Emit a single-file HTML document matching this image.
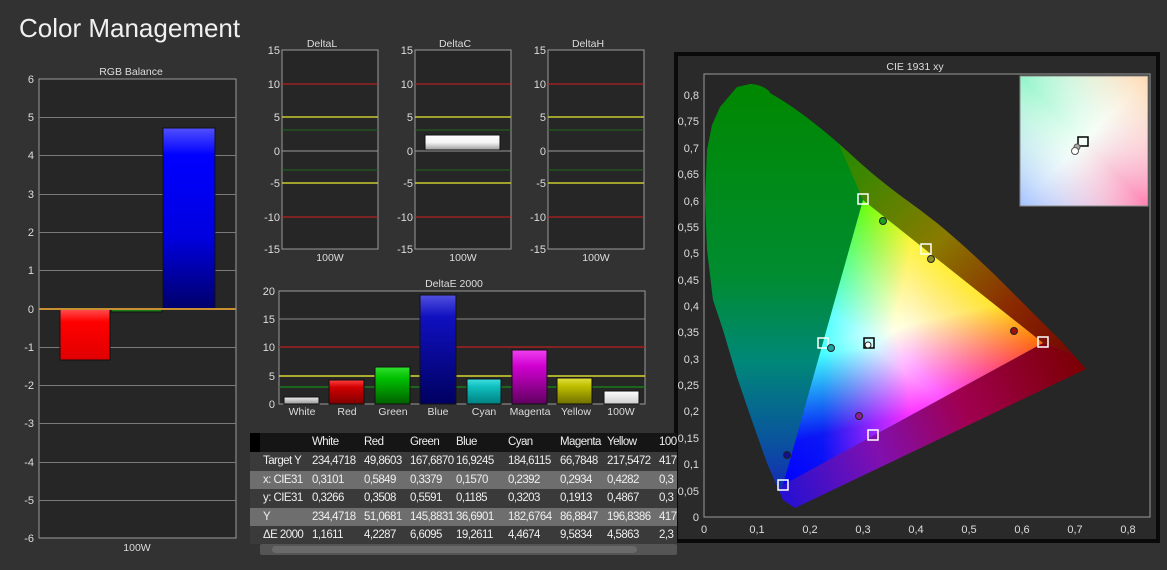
<!DOCTYPE html>
<html><head><meta charset="utf-8"><style>
html,body{margin:0;padding:0;background:#323232;width:1167px;height:570px;overflow:hidden;font-family:"Liberation Sans",sans-serif}
svg text{font-family:"Liberation Sans",sans-serif}
.tbl{position:absolute;left:250px;top:433px;width:427px;height:111px;overflow:hidden;font-size:11.5px;letter-spacing:-0.55px;color:#eee}
.row{position:absolute;left:0;width:427px;height:18.5px;line-height:18.5px;white-space:nowrap}
.row span{position:absolute}
</style></head><body>
<svg width="1167" height="570" style="position:absolute;left:0;top:0">
<defs>
<linearGradient id="gR" x1="0" y1="0" x2="0" y2="1"><stop offset="0" stop-color="#ff5050"/><stop offset=".25" stop-color="#ff0000"/><stop offset="1" stop-color="#e00000"/></linearGradient>
<linearGradient id="gB" x1="0" y1="0" x2="0" y2="1"><stop offset="0" stop-color="#5050ff"/><stop offset=".15" stop-color="#0000ff"/><stop offset=".6" stop-color="#0000e0"/><stop offset="1" stop-color="#00006a"/></linearGradient>
<linearGradient id="eW" x1="0" y1="0" x2="0" y2="1"><stop offset="0" stop-color="#eee"/><stop offset="1" stop-color="#999"/></linearGradient>
<linearGradient id="eR" x1="0" y1="0" x2="0" y2="1"><stop offset="0" stop-color="#ff4040"/><stop offset=".3" stop-color="#d00000"/><stop offset="1" stop-color="#800000"/></linearGradient>
<linearGradient id="eG" x1="0" y1="0" x2="0" y2="1"><stop offset="0" stop-color="#30e030"/><stop offset=".3" stop-color="#00c000"/><stop offset="1" stop-color="#006000"/></linearGradient>
<linearGradient id="eB" x1="0" y1="0" x2="0" y2="1"><stop offset="0" stop-color="#5050e0"/><stop offset=".2" stop-color="#1010c0"/><stop offset="1" stop-color="#000060"/></linearGradient>
<linearGradient id="eC" x1="0" y1="0" x2="0" y2="1"><stop offset="0" stop-color="#40e0e0"/><stop offset=".3" stop-color="#10c0c0"/><stop offset="1" stop-color="#008080"/></linearGradient>
<linearGradient id="eM" x1="0" y1="0" x2="0" y2="1"><stop offset="0" stop-color="#f040f0"/><stop offset=".3" stop-color="#d000d0"/><stop offset="1" stop-color="#600060"/></linearGradient>
<linearGradient id="eY" x1="0" y1="0" x2="0" y2="1"><stop offset="0" stop-color="#e0e040"/><stop offset=".3" stop-color="#c0c000"/><stop offset="1" stop-color="#707000"/></linearGradient>
<linearGradient id="eWW" x1="0" y1="0" x2="0" y2="1"><stop offset="0" stop-color="#fff"/><stop offset="1" stop-color="#ccc"/></linearGradient>
<linearGradient id="dc" x1="0" y1="0" x2="0" y2="1"><stop offset="0" stop-color="#fff"/><stop offset=".5" stop-color="#f4f4f4"/><stop offset="1" stop-color="#999"/></linearGradient>
<clipPath id="horse"><path d="M795,508 L783,500 L767,463 L750,415 L737,377 L723,330 L713,300 L707,250 L705,200 L707,150 L712,125 L720,107 L737,87 L750,84 C760,84 770,90 770,93 C800,110 830,135 857,160 C890,190 915,205 937,223 C960,242 985,265 1003,283 C1025,305 1045,325 1063,343 L1086,369 Z"/></clipPath>
<linearGradient id="baseV" gradientUnits="userSpaceOnUse" x1="0" y1="85" x2="0" y2="510"><stop offset="0" stop-color="#008800"/><stop offset=".45" stop-color="#008c30"/><stop offset=".65" stop-color="#008878"/><stop offset=".85" stop-color="#0a50a0"/><stop offset="1" stop-color="#1818c0"/></linearGradient>
<linearGradient id="low" gradientUnits="userSpaceOnUse" x1="790" y1="500" x2="1090" y2="370"><stop offset="0" stop-color="#2a10d0"/><stop offset=".3" stop-color="#8010b0"/><stop offset=".6" stop-color="#a00050"/><stop offset="1" stop-color="#7a0000"/></linearGradient>
<linearGradient id="up" gradientUnits="userSpaceOnUse" x1="850" y1="150" x2="1080" y2="370"><stop offset="0" stop-color="#2a8a00"/><stop offset=".4" stop-color="#8a7a00"/><stop offset=".7" stop-color="#8a2a00"/><stop offset="1" stop-color="#700000"/></linearGradient>
<linearGradient id="tR" gradientUnits="userSpaceOnUse" x1="1043" y1="343" x2="823" y2="342"><stop offset="0" stop-color="#ff0000"/><stop offset=".6" stop-color="#ff0030" stop-opacity=".9"/><stop offset="1" stop-color="#ff0000" stop-opacity="0"/></linearGradient>
<linearGradient id="tG" gradientUnits="userSpaceOnUse" x1="863" y1="200" x2="913" y2="414"><stop offset="0" stop-color="#00ff00"/><stop offset=".6" stop-color="#40ff20" stop-opacity=".9"/><stop offset="1" stop-color="#00ff00" stop-opacity="0"/></linearGradient>
<linearGradient id="tB" gradientUnits="userSpaceOnUse" x1="783" y1="485" x2="953" y2="271"><stop offset="0" stop-color="#0000ff"/><stop offset=".6" stop-color="#2040ff" stop-opacity=".9"/><stop offset="1" stop-color="#0000ff" stop-opacity="0"/></linearGradient>
<linearGradient id="inA" x1="0" y1="0" x2="1" y2="1"><stop offset="0" stop-color="#90f4c8"/><stop offset=".5" stop-color="#f4fff8"/><stop offset="1" stop-color="#ff80b0"/></linearGradient>
<linearGradient id="inB" x1="1" y1="0" x2="0" y2="1"><stop offset="0" stop-color="#ffd8b0"/><stop offset=".5" stop-color="#fff" stop-opacity="0"/><stop offset="1" stop-color="#a0c0ff"/></linearGradient>
</defs>

<text x="19" y="37" font-size="26" fill="#f0f0f0">Color Management</text>

<rect x="39" y="79" width="197" height="459" fill="#262626" stroke="#9a9a9a" stroke-width="1"/>
<text x="131" y="75" font-size="10.5" fill="#ddd" text-anchor="middle">RGB Balance</text>
<g stroke="#7a7a7a" stroke-width="1">
<line x1="39" y1="117.5" x2="236" y2="117.5"/><line x1="39" y1="155.5" x2="236" y2="155.5"/><line x1="39" y1="194.5" x2="236" y2="194.5"/><line x1="39" y1="232.5" x2="236" y2="232.5"/><line x1="39" y1="270.5" x2="236" y2="270.5"/>
<line x1="39" y1="347.5" x2="236" y2="347.5"/><line x1="39" y1="385.5" x2="236" y2="385.5"/><line x1="39" y1="423.5" x2="236" y2="423.5"/><line x1="39" y1="462.5" x2="236" y2="462.5"/><line x1="39" y1="500.5" x2="236" y2="500.5"/>
</g>
<rect x="60" y="309" width="50" height="51" fill="url(#gR)" stroke="#111"/>
<rect x="111" y="309" width="51" height="3" fill="#1a7a1a" stroke="#111"/>
<rect x="163" y="128" width="52" height="181" fill="url(#gB)" stroke="#111"/>
<line x1="39" y1="309" x2="236" y2="309" stroke="#c89030" stroke-width="2"/>
<g font-size="11" fill="#ddd" text-anchor="end">
<text x="34" y="83">6</text><text x="34" y="121">5</text><text x="34" y="159">4</text><text x="34" y="198">3</text><text x="34" y="236">2</text><text x="34" y="274">1</text><text x="34" y="313">0</text><text x="34" y="351">-1</text><text x="34" y="389">-2</text><text x="34" y="427">-3</text><text x="34" y="466">-4</text><text x="34" y="504">-5</text><text x="34" y="542">-6</text>
</g>
<text x="137" y="551" font-size="10.5" fill="#ddd" text-anchor="middle">100W</text>

<g>
<rect x="282" y="50" width="96" height="199" fill="#262626" stroke="#9a9a9a"/>
<line x1="282" y1="84" x2="378" y2="84" stroke="#d02020"/><line x1="282" y1="217" x2="378" y2="217" stroke="#d02020"/>
<line x1="282" y1="117" x2="378" y2="117" stroke="#c8c830" stroke-width="1.5"/><line x1="282" y1="183" x2="378" y2="183" stroke="#c8c830" stroke-width="1.5"/>
<line x1="282" y1="130" x2="378" y2="130" stroke="#1f6a1f"/><line x1="282" y1="170" x2="378" y2="170" stroke="#1f6a1f"/>
<line x1="282" y1="151" x2="378" y2="151" stroke="#999"/>
<g font-size="11" fill="#ddd" text-anchor="end"><text x="280" y="54">15</text><text x="280" y="88">10</text><text x="280" y="121">5</text><text x="280" y="155">0</text><text x="280" y="187">-5</text><text x="280" y="221">-10</text><text x="280" y="253">-15</text></g>
<text x="330" y="261" font-size="10.5" fill="#ddd" text-anchor="middle">100W</text>
<text x="322" y="47" font-size="10.5" fill="#ddd" text-anchor="middle">DeltaL</text>
</g>
<g transform="translate(133,0)">
<rect x="282" y="50" width="96" height="199" fill="#262626" stroke="#9a9a9a"/>
<line x1="282" y1="84" x2="378" y2="84" stroke="#d02020"/><line x1="282" y1="217" x2="378" y2="217" stroke="#d02020"/>
<line x1="282" y1="117" x2="378" y2="117" stroke="#c8c830" stroke-width="1.5"/><line x1="282" y1="183" x2="378" y2="183" stroke="#c8c830" stroke-width="1.5"/>
<line x1="282" y1="130" x2="378" y2="130" stroke="#1f6a1f"/><line x1="282" y1="170" x2="378" y2="170" stroke="#1f6a1f"/>
<line x1="282" y1="151" x2="378" y2="151" stroke="#999"/>
<rect x="292" y="135" width="75" height="15" fill="url(#dc)" stroke="#111"/>
<g font-size="11" fill="#ddd" text-anchor="end"><text x="280" y="54">15</text><text x="280" y="88">10</text><text x="280" y="121">5</text><text x="280" y="155">0</text><text x="280" y="187">-5</text><text x="280" y="221">-10</text><text x="280" y="253">-15</text></g>
<text x="330" y="261" font-size="10.5" fill="#ddd" text-anchor="middle">100W</text>
<text x="322" y="47" font-size="10.5" fill="#ddd" text-anchor="middle">DeltaC</text>
</g>
<g transform="translate(266,0)">
<rect x="282" y="50" width="96" height="199" fill="#262626" stroke="#9a9a9a"/>
<line x1="282" y1="84" x2="378" y2="84" stroke="#d02020"/><line x1="282" y1="217" x2="378" y2="217" stroke="#d02020"/>
<line x1="282" y1="117" x2="378" y2="117" stroke="#c8c830" stroke-width="1.5"/><line x1="282" y1="183" x2="378" y2="183" stroke="#c8c830" stroke-width="1.5"/>
<line x1="282" y1="130" x2="378" y2="130" stroke="#1f6a1f"/><line x1="282" y1="170" x2="378" y2="170" stroke="#1f6a1f"/>
<line x1="282" y1="151" x2="378" y2="151" stroke="#999"/>
<g font-size="11" fill="#ddd" text-anchor="end"><text x="280" y="54">15</text><text x="280" y="88">10</text><text x="280" y="121">5</text><text x="280" y="155">0</text><text x="280" y="187">-5</text><text x="280" y="221">-10</text><text x="280" y="253">-15</text></g>
<text x="330" y="261" font-size="10.5" fill="#ddd" text-anchor="middle">100W</text>
<text x="322" y="47" font-size="10.5" fill="#ddd" text-anchor="middle">DeltaH</text>
</g>

<text x="454" y="287" font-size="10.5" fill="#ddd" text-anchor="middle">DeltaE 2000</text>
<rect x="279" y="291" width="366" height="113" fill="#262626" stroke="#9a9a9a"/>
<line x1="279" y1="319" x2="645" y2="319" stroke="#8a8a8a"/>
<line x1="279" y1="347" x2="645" y2="347" stroke="#a02020" stroke-width="1.5"/>
<line x1="279" y1="376" x2="645" y2="376" stroke="#d8d830" stroke-width="1.5"/>
<line x1="279" y1="387" x2="645" y2="387" stroke="#1a7a1a" stroke-width="1.5"/>
<rect x="284" y="397" width="35" height="7" fill="url(#eW)" stroke="#111"/>
<rect x="329" y="380" width="35" height="24" fill="url(#eR)" stroke="#111"/>
<rect x="375" y="367" width="35" height="37" fill="url(#eG)" stroke="#111"/>
<rect x="420" y="295" width="36" height="109" fill="url(#eB)" stroke="#111"/>
<rect x="467" y="379" width="34" height="25" fill="url(#eC)" stroke="#111"/>
<rect x="512" y="350" width="35" height="54" fill="url(#eM)" stroke="#111"/>
<rect x="557" y="378" width="35" height="26" fill="url(#eY)" stroke="#111"/>
<rect x="604" y="391" width="35" height="13" fill="url(#eWW)" stroke="#111"/>
<g font-size="11" fill="#ddd" text-anchor="end"><text x="275" y="295">20</text><text x="275" y="323">15</text><text x="275" y="351">10</text><text x="275" y="380">5</text><text x="275" y="408">0</text></g>
<g font-size="10.5" fill="#ddd" text-anchor="middle"><text x="302" y="415">White</text><text x="347" y="415">Red</text><text x="393" y="415">Green</text><text x="438" y="415">Blue</text><text x="484" y="415">Cyan</text><text x="530" y="415">Magenta</text><text x="576" y="415">Yellow</text><text x="621" y="415">100W</text></g>

<rect x="676" y="54" width="482" height="487" fill="#2a2a2a" stroke="#0a0a0a" stroke-width="4"/>
<text x="915" y="70" font-size="10.5" fill="#ddd" text-anchor="middle">CIE 1931 xy</text>
<rect x="704" y="74" width="446" height="443" fill="#262626" stroke="#9a9a9a"/>
<g clip-path="url(#horse)">
<rect x="700" y="70" width="400" height="450" fill="url(#baseV)"/>
<polygon points="760,540 783,485 1043,343 1120,370 1100,420" fill="url(#low)"/>
<polygon points="863,200 820,100 1000,200 1120,370 1043,343" fill="url(#up)"/>
<polygon points="863,200 1043,343 783,485" fill="#000"/>
<polygon points="863,200 1043,343 783,485" fill="url(#tR)" style="mix-blend-mode:plus-lighter"/>
<polygon points="863,200 1043,343 783,485" fill="url(#tG)" style="mix-blend-mode:plus-lighter"/>
<polygon points="863,200 1043,343 783,485" fill="url(#tB)" style="mix-blend-mode:plus-lighter"/>
</g>
<g fill="none" stroke="#fff" stroke-width="1.5">
<rect x="858" y="194" width="10" height="10"/><rect x="921" y="244" width="10" height="10"/><rect x="1038" y="337" width="10" height="10"/><rect x="818" y="338" width="10" height="10"/><rect x="778" y="480" width="10" height="10"/><rect x="868" y="430" width="10" height="10"/>
</g>
<rect x="864" y="338" width="10" height="10" fill="none" stroke="#000" stroke-width="1.5"/>
<g stroke="#222" stroke-width="1">
<circle cx="883" cy="221" r="3.5" fill="#20a020"/><circle cx="931" cy="259" r="3.5" fill="#909020"/><circle cx="1014" cy="331" r="3.5" fill="#a01010"/><circle cx="831" cy="348" r="3.5" fill="#20a0a0"/><circle cx="859" cy="416" r="3.5" fill="#902090"/><circle cx="787" cy="455" r="3.5" fill="#101090"/><circle cx="868" cy="345" r="3" fill="#fff"/>
</g>
<rect x="1020" y="76" width="128" height="130" fill="url(#inA)"/>
<rect x="1020" y="76" width="128" height="130" fill="url(#inB)"/>
<rect x="1020" y="76" width="128" height="130" fill="none" stroke="#888"/>
<rect x="1078" y="137" width="10" height="9" fill="none" stroke="#000" stroke-width="1.5"/>
<circle cx="1077" cy="147" r="3" fill="#aaa" stroke="#555"/>
<circle cx="1075" cy="151" r="3.5" fill="#fff" stroke="#555"/>
<g font-size="11" fill="#ddd" text-anchor="end">
<text x="699" y="99">0,8</text><text x="699" y="125">0,75</text><text x="699" y="152">0,7</text><text x="699" y="178">0,65</text><text x="699" y="205">0,6</text><text x="699" y="231">0,55</text><text x="699" y="257">0,5</text><text x="699" y="284">0,45</text><text x="699" y="310">0,4</text><text x="699" y="336">0,35</text><text x="699" y="363">0,3</text><text x="699" y="389">0,25</text><text x="699" y="415">0,2</text><text x="699" y="442">0,15</text><text x="699" y="468">0,1</text><text x="699" y="495">0,05</text><text x="699" y="521">0</text>
</g>
<g font-size="11" fill="#ddd" text-anchor="middle">
<text x="704" y="533">0</text><text x="757" y="533">0,1</text><text x="810" y="533">0,2</text><text x="863" y="533">0,3</text><text x="916" y="533">0,4</text><text x="969" y="533">0,5</text><text x="1022" y="533">0,6</text><text x="1075" y="533">0,7</text><text x="1128" y="533">0,8</text>
</g>
</svg>

<div class="tbl">
<div class="row" style="top:0;background:#151515;height:19px"><span style="left:0;width:10px;height:19px;background:#000"></span><span style="left:62px">White</span><span style="left:114px">Red</span><span style="left:160px">Green</span><span style="left:206px">Blue</span><span style="left:258px">Cyan</span><span style="left:310px">Magenta</span><span style="left:357px">Yellow</span><span style="left:409px">100</span></div>
<div class="row" style="top:19px;background:#3a3a3a"><span style="left:13px">Target Y</span><span style="left:62px">234,4718</span><span style="left:114px">49,8603</span><span style="left:160px">167,6870</span><span style="left:206px">16,9245</span><span style="left:258px">184,6115</span><span style="left:310px">66,7848</span><span style="left:357px">217,5472</span><span style="left:409px">417</span></div>
<div class="row" style="top:37.5px;background:#6e6e6e"><span style="left:13px">x: CIE31</span><span style="left:62px">0,3101</span><span style="left:114px">0,5849</span><span style="left:160px">0,3379</span><span style="left:206px">0,1570</span><span style="left:258px">0,2392</span><span style="left:310px">0,2934</span><span style="left:357px">0,4282</span><span style="left:409px">0,3</span></div>
<div class="row" style="top:56px;background:#3a3a3a"><span style="left:13px">y: CIE31</span><span style="left:62px">0,3266</span><span style="left:114px">0,3508</span><span style="left:160px">0,5591</span><span style="left:206px">0,1185</span><span style="left:258px">0,3203</span><span style="left:310px">0,1913</span><span style="left:357px">0,4867</span><span style="left:409px">0,3</span></div>
<div class="row" style="top:74.5px;background:#6e6e6e"><span style="left:13px">Y</span><span style="left:62px">234,4718</span><span style="left:114px">51,0681</span><span style="left:160px">145,8831</span><span style="left:206px">36,6901</span><span style="left:258px">182,6764</span><span style="left:310px">86,8847</span><span style="left:357px">196,8386</span><span style="left:409px">417</span></div>
<div class="row" style="top:93px;background:#3a3a3a"><span style="left:13px">ΔE 2000</span><span style="left:62px">1,1611</span><span style="left:114px">4,2287</span><span style="left:160px">6,6095</span><span style="left:206px">19,2611</span><span style="left:258px">4,4674</span><span style="left:310px">9,5834</span><span style="left:357px">4,5863</span><span style="left:409px">2,3</span></div>
</div>
<div style="position:absolute;left:260px;top:544px;width:417px;height:11px;background:#555;border-radius:2px"></div>
<div style="position:absolute;left:272px;top:546px;width:365px;height:7px;background:#6a6a6a;border-radius:4px"></div>
</body></html>
